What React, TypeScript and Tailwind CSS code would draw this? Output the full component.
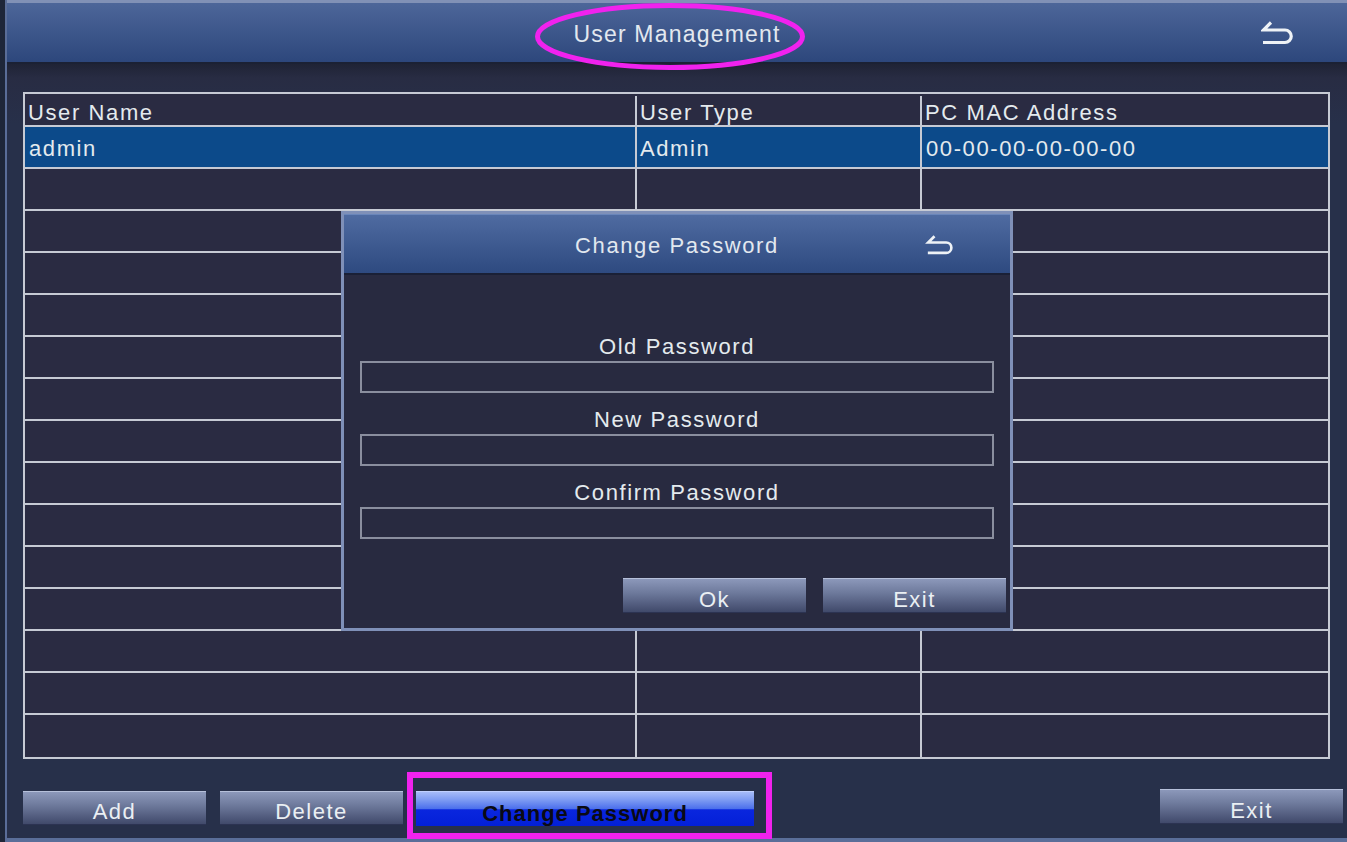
import clsx from 'clsx';

const rows = [
  { name: 'admin', type: 'Admin', mac: '00-00-00-00-00-00' },
  ...Array(14).fill(null).map(() => ({ name: '', type: '', mac: '' })),
];

function BackIcon({ className }: { className?: string }) {
  return (
    <svg viewBox="0 0 32 24" className={className} fill="none" stroke="#eef2f6" strokeWidth={3.2}>
      <path d="M10 1.5 L2.5 9 H24 A6.2 6.2 0 0 1 24 21.5 H2" />
    </svg>
  );
}

function GrayButton({ label, className }: { label: string; className?: string }) {
  return (
    <div
      className={clsx(
        'flex items-center justify-center border-t border-[#b6c0da] bg-[linear-gradient(to_bottom,#8c98ba_0%,#6e7a9c_40%,#525c7e_75%,#3e4768_100%)] pt-[6px] text-[22px] tracking-[1.5px] text-[#eaeff3] shadow-[inset_0_-1px_0_#2c3352]',
        className,
      )}
    >
      {label}
    </div>
  );
}

function Field({ label }: { label: string }) {
  return (
    <div className="flex flex-col">
      <div className="h-[24px] pt-[2px] text-center text-[22px] leading-[24px] tracking-[1.6px]">{label}</div>
      <div className="mt-[4px] h-[32px] border-2 border-[#8a8e9e] bg-[#282a40]" />
    </div>
  );
}

export default function App() {
  return (
    <div className="relative flex h-[842px] w-[1347px] overflow-hidden bg-[#26304a] font-['Liberation_Sans',Arial,sans-serif] text-[#e4eaee]">
      <div className="w-[5px] bg-[#1e2639]" />
      <div className="w-[2px] bg-[#5a6d98]" />
      <div className="flex flex-1 flex-col">
        <header className="relative flex h-[64px] items-center justify-center border-t-[3px] border-b-2 border-t-[#8191b6] border-b-[#1b2134] bg-gradient-to-b from-[#4d6699] to-[#2d477c] pt-[3px]">
          <span className="text-[23px] tracking-[1.2px] text-[#e2e8ef]">User Management</span>
          <BackIcon className="absolute right-[54px] top-[18px] h-[24px] w-[32px]" />
        </header>

        <main className="flex flex-1 flex-col bg-[linear-gradient(to_bottom,#1f2335_0px,#282c43_14px,#27304a_60px)]">
          <div className="ml-[16px] mr-[17px] mt-[28px] border-2 border-[#c6cad4] bg-[#2a2b42]">
            <div className="grid h-[33px] grid-cols-[612px_285px_1fr] border-b-2 border-[#c6cad4] pt-[2px] text-[22px] tracking-[1.6px]">
              <div className="flex items-center border-r-2 border-[#c6cad4] pl-[3px]">User Name</div>
              <div className="flex items-center border-r-2 border-[#c6cad4] pl-[3px]">User Type</div>
              <div className="flex items-center pl-[3px]">PC MAC Address</div>
            </div>
            {rows.map((r, i) => (
              <div
                key={i}
                className={clsx(
                  'grid h-[42px] grid-cols-[612px_285px_1fr] text-[22px] tracking-[1.6px]',
                  i < rows.length - 1 && 'border-b-2 border-[#c6cad4]',
                  i === 0 && 'bg-[#0c4a8a]',
                )}
              >
                <div className="flex items-center border-r-2 border-[#c6cad4] pl-[4px] pt-[2px]">{r.name}</div>
                <div className="flex items-center border-r-2 border-[#c6cad4] pl-[3px] pt-[2px]">{r.type}</div>
                <div className="flex items-center pl-[4px] pt-[2px]">{r.mac}</div>
              </div>
            ))}
          </div>

          <div className="ml-[16px] mr-[4px] mt-[32px] flex items-start">
            <GrayButton label="Add" className="h-[34px] w-[183px]" />
            <GrayButton label="Delete" className="ml-[14px] h-[34px] w-[183px]" />
            <div className="ml-[13px] flex h-[35px] w-[338px] items-center justify-center border-t border-[#c0d0ff] bg-[linear-gradient(to_bottom,#a6bbf8_0%,#7a98f2_25%,#4a6eec_50%,#0a26de_52%,#0320d8_100%)] pt-[9px] text-[22px] font-bold tracking-[1px] text-[#0a0a14]">
              Change Password
            </div>
            <div className="flex-1" />
            <GrayButton label="Exit" className="-mt-[2px] h-[35px] w-[183px]" />
          </div>
          <div className="flex-1" />
          <div className="h-[4px] bg-[#5a6e99]" />
        </main>
      </div>

      {/* Change Password dialog */}
      <div className="absolute left-[341px] top-[211px] flex h-[420px] w-[672px] flex-col border-[3px] border-[#7f90b8] bg-[#282a40]">
        <div className="relative flex h-[61px] items-center justify-center border-t border-b-2 border-t-[#6a86ba] border-b-[#1a2036] bg-gradient-to-b from-[#4f6ba1] to-[#2e4a80] pt-[2px]">
          <span className="text-[22px] tracking-[1.6px] text-[#e2e8ef]">Change Password</span>
          <BackIcon className="absolute right-[56px] top-[20px] h-[20px] w-[29px]" />
        </div>
        <div className="flex flex-col px-[16px] pt-[58px]">
          <Field label="Old Password" />
          <div className="mt-[13px]">
            <Field label="New Password" />
          </div>
          <div className="mt-[13px]">
            <Field label="Confirm Password" />
          </div>
          <div className="-mr-[12px] mt-[39px] flex justify-end gap-[17px]">
            <GrayButton label="Ok" className="h-[35px] w-[183px]" />
            <GrayButton label="Exit" className="h-[35px] w-[183px]" />
          </div>
        </div>
      </div>

      {/* highlight marks */}
      <svg className="absolute left-[535px] top-[3px] h-[67px] w-[270px]" viewBox="0 0 270 67" fill="none">
        <ellipse cx="135" cy="33.5" rx="132.5" ry="31" stroke="#f022ee" strokeWidth={5} />
      </svg>
      <div className="absolute left-[407px] top-[772px] h-[67px] w-[365px] border-[6px] border-[#f022ee]" />
    </div>
  );
}
